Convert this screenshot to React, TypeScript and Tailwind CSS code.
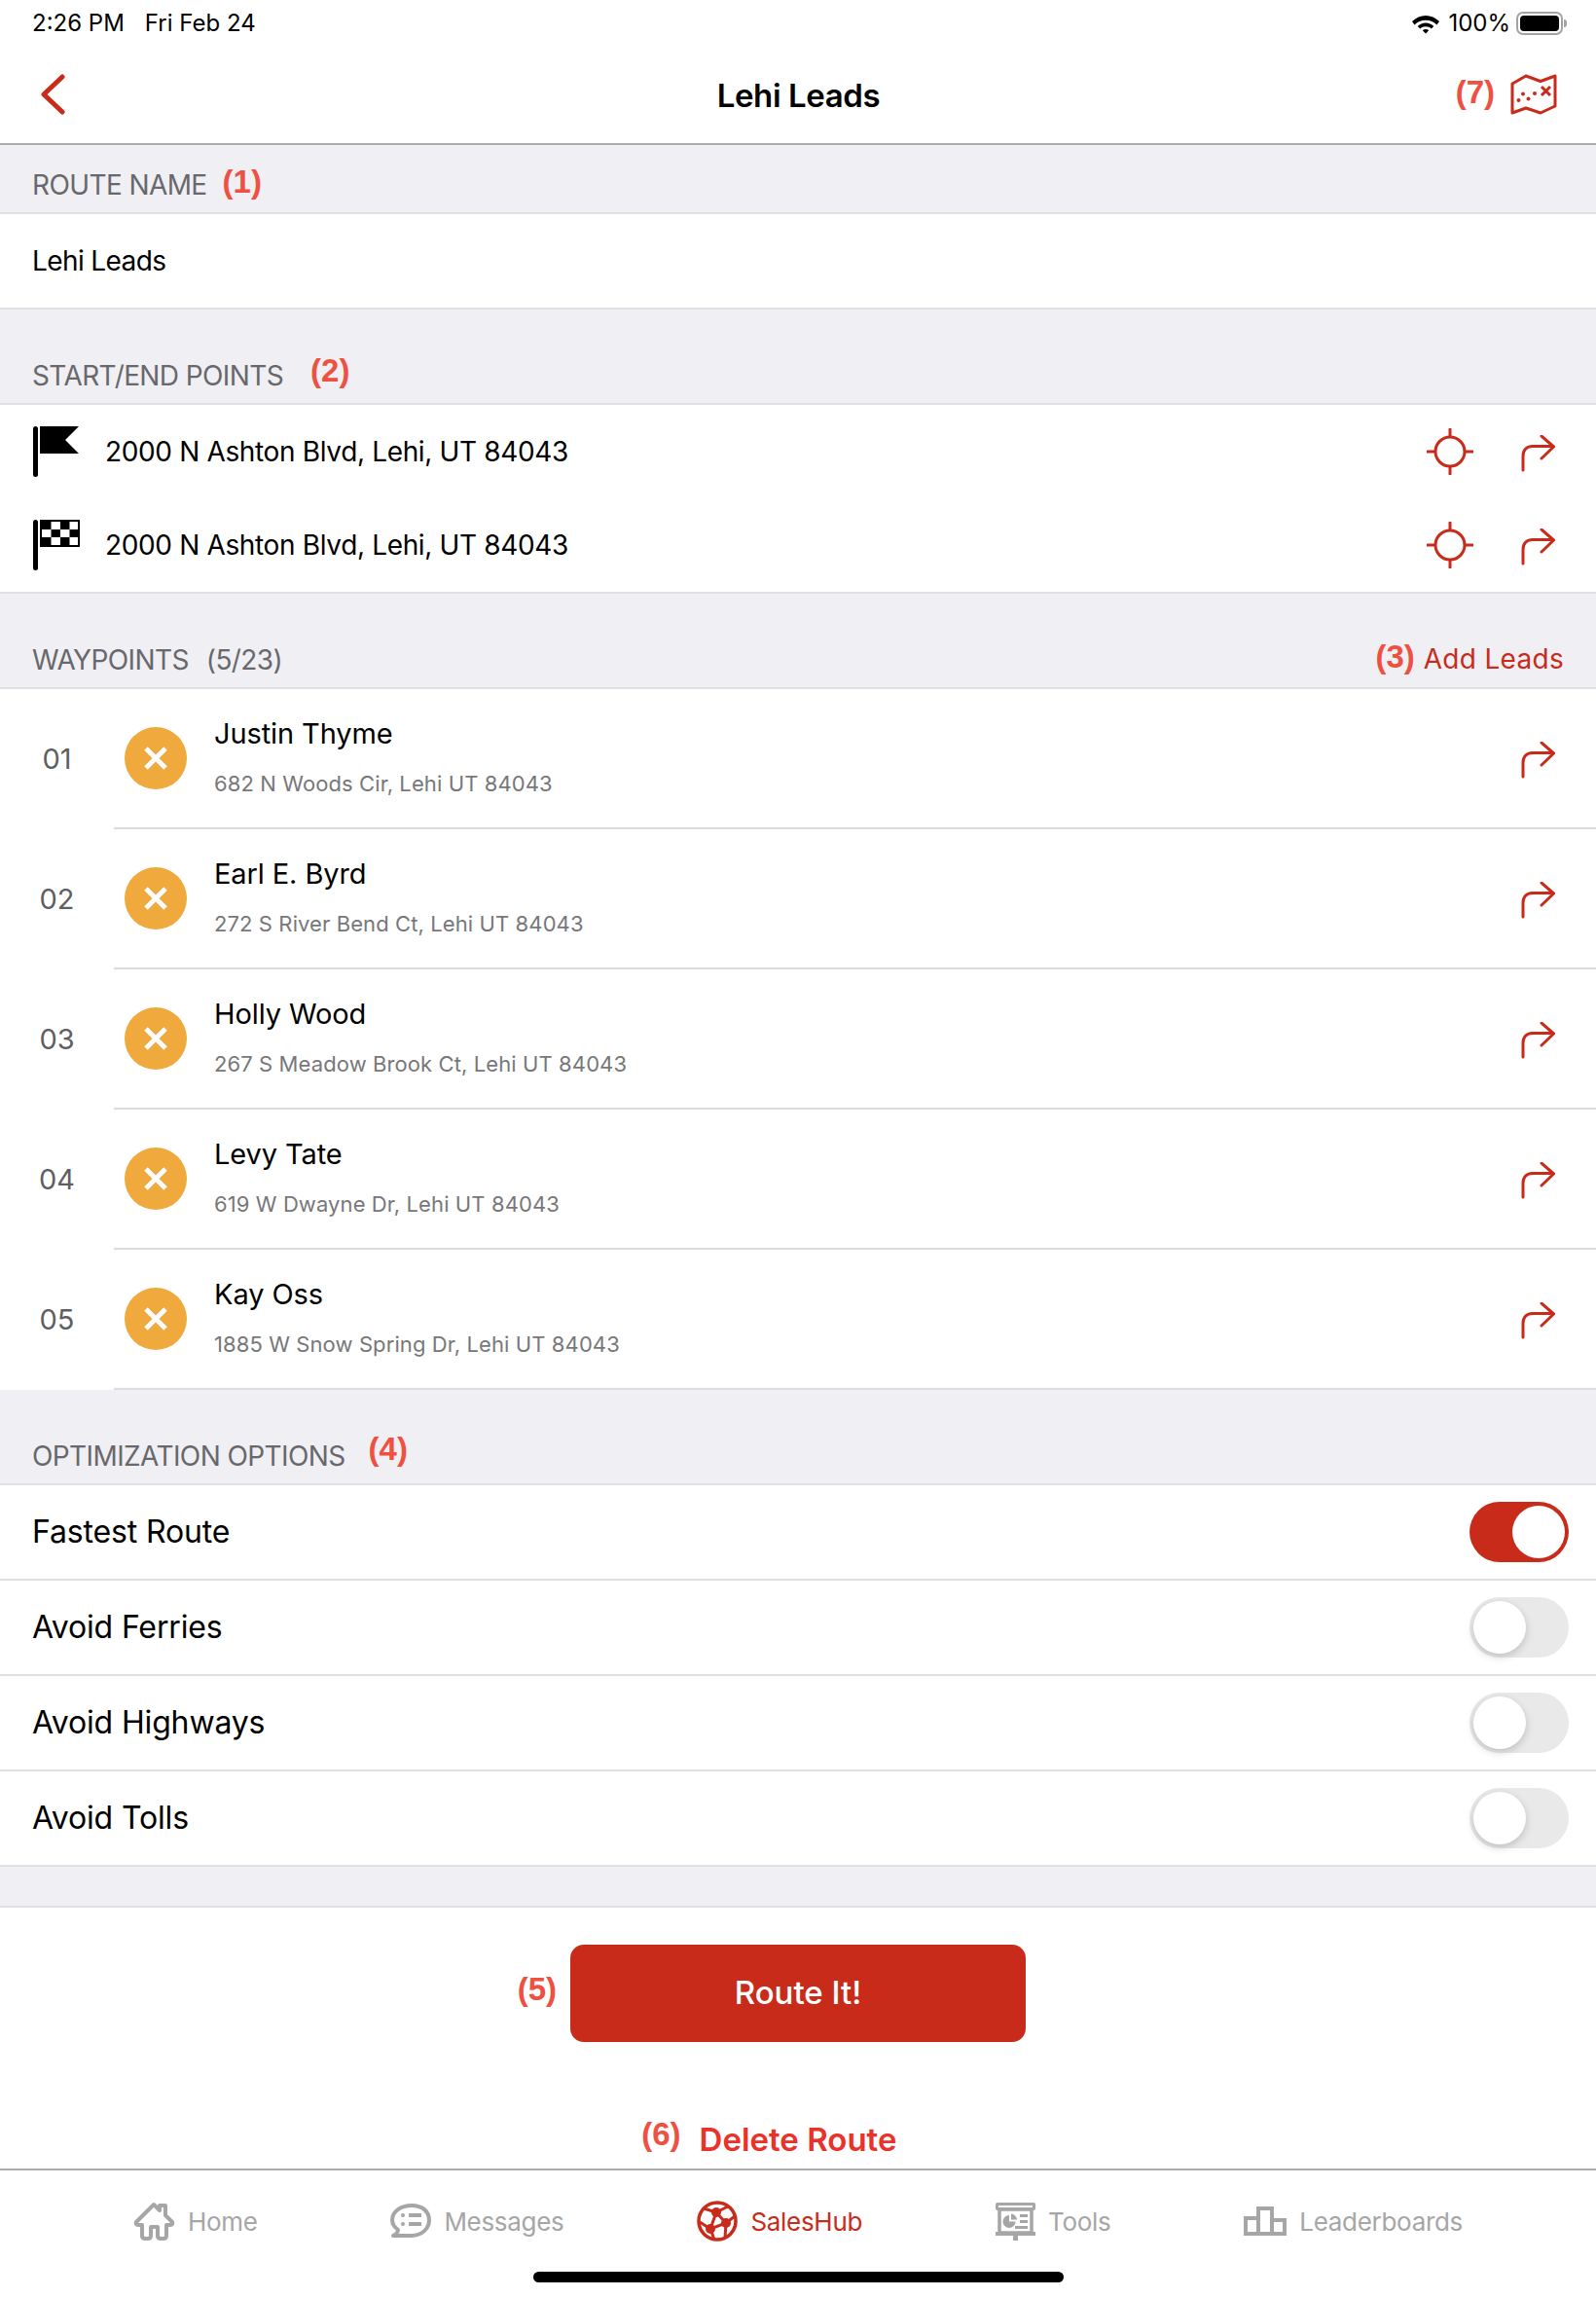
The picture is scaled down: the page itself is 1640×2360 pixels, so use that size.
import React from 'react';

const RED = '#c92b1b';
const GRAY = '#a6a6a6';

function Note({ children, className = '' }: { children: React.ReactNode; className?: string }) {
  return (
    <span className={`font-['Liberation_Sans',sans-serif] font-bold text-[33px] leading-[40px] text-[#ee5042] ${className}`}>
      {children}
    </span>
  );
}

function SectionHeader({ children, height }: { children: React.ReactNode; height: string }) {
  return (
    <div className={`${height} flex items-end justify-between pl-[33px] pr-[33px] pb-[11px] bg-[#f0f0f4] border-b-2 border-[#e0e0e3]`}>
      {children}
    </div>
  );
}

function HeaderLabel({ children }: { children: React.ReactNode }) {
  return <span className="text-[28px] leading-[34px] text-[#68686c] tracking-[-0.6px]">{children}</span>;
}

function ArrowIcon() {
  return (
    <svg width="36" height="38" viewBox="0 0 36 38" fill="none" stroke={RED} strokeWidth="3" strokeLinecap="round" strokeLinejoin="round" className="mt-[3px]">
      <path d="M2 36V22C2 15 6 11.500 12 11.500H33" />
      <path d="M21 1L33.500 12L21 24" />
    </svg>
  );
}

function TargetIcon() {
  return (
    <svg width="48" height="48" viewBox="0 0 48 48" fill="none" stroke={RED} strokeWidth="3" strokeLinecap="round">
      <circle cx="24" cy="24" r="15" />
      <path d="M24 1V8M24 40V47M1 24H8M40 24H47" />
    </svg>
  );
}

function StartFlag() {
  return (
    <svg width="48" height="52" viewBox="0 0 48 52">
      <rect x="0" y="0" width="5" height="52" rx="2.500" fill="#000" />
      <path d="M7 0H47L33 14L47 28H7Z" fill="#000" />
    </svg>
  );
}

function EndFlag() {
  const cells: React.ReactNode[] = [];
  for (let r = 0; r < 3; r++) {
    for (let c = 0; c < 4; c++) {
      if ((r + c) % 2 === 0) cells.push(<rect key={`${r}-${c}`} x={9 + c * 9.500} y={2 + r * 8} width="9.500" height="8" fill="#000" />);
    }
  }
  return (
    <svg width="48" height="52" viewBox="0 0 48 52">
      <rect x="0" y="0" width="5" height="52" rx="2.500" fill="#000" />
      <rect x="8" y="1" width="39" height="26" fill="#fff" stroke="#000" strokeWidth="2" />
      {cells}
    </svg>
  );
}

function MapIcon() {
  return (
    <svg width="48" height="42" viewBox="0 0 48 42" fill="none">
      <path d="M2 10L16 2L31 7.500L46 2V33L31 40L16 35L2 40Z" stroke={RED} strokeWidth="3" strokeLinejoin="round" />
      <circle cx="8.500" cy="27" r="2" fill={RED} />
      <circle cx="13" cy="20.500" r="2" fill={RED} />
      <circle cx="18.500" cy="25.500" r="2" fill={RED} />
      <circle cx="25" cy="20" r="2" fill={RED} />
      <path d="M32 13L41 22M41 13L32 22" stroke={RED} strokeWidth="3" />
    </svg>
  );
}

function Toggle({ on }: { on?: boolean }) {
  return (
    <div className={`w-[102px] h-[62px] rounded-full p-[4px] flex ${on ? 'bg-[#c92b1b] justify-end' : 'bg-[#e9e9ea] justify-start'}`}>
      <div className={`w-[54px] h-[54px] rounded-full bg-white ${on ? '' : 'shadow-[0_3px_8px_rgba(0,0,0,0.18)]'}`} />
    </div>
  );
}

function HomeIcon() {
  return (
    <svg width="43" height="40" viewBox="0 0 43 40" fill="none" stroke={GRAY} strokeWidth="4" strokeLinejoin="round">
      <path d="M21 3L3 21Q2 24 5 24H9V35Q9 38 12 38H15Q18 38 18 35V26H25V35Q25 38 28 38H31Q34 38 34 35V24H38Q41 24 40 21L33 14V4H27V9Z" />
    </svg>
  );
}

function MessagesIcon() {
  return (
    <svg width="42" height="36" viewBox="0 0 42 36" fill="none">
      <path d="M8 27C4 24 2 21 2 17C2 8 11 2 22 2C33 2 40 8 40 17C40 26 32 33 22 33H3C5 32 8 30 8 27Z" stroke={GRAY} strokeWidth="4" strokeLinejoin="round" />
      <circle cx="13" cy="12" r="2" fill={GRAY} />
      <circle cx="13" cy="21" r="2" fill={GRAY} />
      <rect x="19" y="10" width="13" height="4" fill={GRAY} />
      <rect x="19" y="19" width="13" height="4" fill={GRAY} />
    </svg>
  );
}

function HubIcon() {
  return (
    <svg width="42" height="42" viewBox="0 0 42 42" fill="none" stroke={RED}>
      <circle cx="21" cy="21" r="19" strokeWidth="3.500" />
      <path d="M20 12L30 23L14 29L20 12M20 12L7 8M20 12L32 6M30 23L39 16M30 23L29 38M14 29L3 22M14 29L18 40" strokeWidth="3" />
      <circle cx="20" cy="12" r="5" fill={RED} stroke="none" />
      <circle cx="30" cy="23" r="5" fill={RED} stroke="none" />
      <circle cx="14" cy="29" r="5" fill={RED} stroke="none" />
    </svg>
  );
}

function ToolsIcon() {
  return (
    <svg width="41" height="39" viewBox="0 0 41 39" fill="none">
      <rect x="0" y="0" width="41" height="8" rx="2" fill={GRAY} />
      <rect x="3" y="3" width="35" height="2" fill="#fff" />
      <rect x="4" y="7" width="33" height="24" stroke={GRAY} strokeWidth="3.500" />
      <rect x="0" y="30" width="41" height="4" fill={GRAY} />
      <rect x="18" y="33" width="5" height="6" fill={GRAY} />
      <path d="M14 13A6.500 6.500 0 1 0 20.500 19.500H14Z" fill={GRAY} />
      <path d="M16 11.500A6.500 6.500 0 0 1 22 17.500H16Z" fill={GRAY} />
      <rect x="25" y="12" width="8" height="3" fill={GRAY} />
      <rect x="25" y="18" width="8" height="3" fill={GRAY} />
      <rect x="20" y="24" width="13" height="3" fill={GRAY} />
    </svg>
  );
}

function BoardsIcon() {
  return (
    <svg width="44" height="30" viewBox="0 0 44 30" fill="none" stroke={GRAY} strokeWidth="4">
      <rect x="2" y="12" width="13" height="16" />
      <rect x="15" y="2" width="14" height="26" />
      <rect x="29" y="14" width="13" height="14" />
    </svg>
  );
}

const waypoints = [
  { num: '01', name: 'Justin Thyme', address: '682 N Woods Cir, Lehi UT 84043' },
  { num: '02', name: 'Earl E. Byrd', address: '272 S River Bend Ct, Lehi UT 84043' },
  { num: '03', name: 'Holly Wood', address: '267 S Meadow Brook Ct, Lehi UT 84043' },
  { num: '04', name: 'Levy Tate', address: '619 W Dwayne Dr, Lehi UT 84043' },
  { num: '05', name: 'Kay Oss', address: '1885 W Snow Spring Dr, Lehi UT 84043' },
];

const options = [
  { label: 'Fastest Route', on: true },
  { label: 'Avoid Ferries' },
  { label: 'Avoid Highways' },
  { label: 'Avoid Tolls' },
];

const tabs = [
  { label: 'Home', icon: <HomeIcon /> },
  { label: 'Messages', icon: <MessagesIcon /> },
  { label: 'SalesHub', icon: <HubIcon />, active: true },
  { label: 'Tools', icon: <ToolsIcon /> },
  { label: 'Leaderboards', icon: <BoardsIcon /> },
];

export default function App() {
  return (
    <div className="w-[1640px] h-[2360px] overflow-hidden bg-white font-['Inter',sans-serif] text-black">
      <div className="h-[46px] flex items-center justify-between pl-[33px] pr-[30px] text-[24px] leading-[30px] pt-[2px]">
        <div className="flex gap-[21px]">
          <span>2:26 PM</span>
          <span>Fri Feb 24</span>
        </div>
        <div className="flex items-center">
          <svg width="30" height="22" viewBox="0 0 30 22" className="mr-[8px]">
            <path d="M15 3C20 3 25 5 29 9L26.500 12.500C23.500 9.500 19.500 7.800 15 7.800C10.500 7.800 6.500 9.500 3.500 12.500L1 9C5 5 10 3 15 3Z" fill="#000" />
            <path d="M15 10.500C18 10.500 21 11.700 23.300 14L20.800 16.500C19.300 15 17.200 14.200 15 14.200C12.800 14.200 10.700 15 9.200 16.500L6.700 14C9 11.700 12 10.500 15 10.500Z" fill="#000" />
            <path d="M15 17C16.200 17 17.300 17.400 18.200 18.200L15 21.500L11.800 18.200C12.700 17.400 13.800 17 15 17Z" fill="#000" />
          </svg>
          <span>100%</span>
          <div className="ml-[6px] w-[48px] h-[24px] rounded-[7px] border-2 border-[#a3a3a3] p-[2px]">
            <div className="w-full h-full rounded-[4px] bg-black" />
          </div>
          <div className="w-[3px] h-[8px] ml-[1px] rounded-r-full bg-[#a3a3a3]" />
        </div>
      </div>

      <div className="h-[103px] grid grid-cols-[1fr_auto_1fr] items-center pl-[41px] pr-[40px] border-b-2 border-[#ababab]">
        <svg width="26" height="42" viewBox="0 0 26 42" fill="none" stroke={RED} strokeWidth="5" strokeLinecap="round" strokeLinejoin="round">
          <path d="M23 3L4 21L23 39" />
        </svg>
        <span className="text-[33px] leading-[40px] font-semibold tracking-[-0.4px] mt-[3px]">Lehi Leads</span>
        <div className="flex items-center justify-end gap-[16px]">
          <Note className="-mt-[3px]">(7)</Note>
          <MapIcon />
        </div>
      </div>

      <SectionHeader height="h-[71px]">
        <div className="flex items-end gap-[16px]">
          <HeaderLabel>ROUTE NAME</HeaderLabel>
          <Note>(1)</Note>
        </div>
      </SectionHeader>
      <div className="h-[98px] flex items-center pl-[33px] text-[28px] tracking-[-0.6px] border-b-2 border-[#e0e0e3]">Lehi Leads</div>

      <SectionHeader height="h-[98px]">
        <div className="flex items-end gap-[28px]">
          <HeaderLabel>START/END POINTS</HeaderLabel>
          <Note className="mb-[2px]">(2)</Note>
        </div>
      </SectionHeader>
      <div className="border-b-2 border-[#e0e0e3]">
        {[<StartFlag key="s" />, <EndFlag key="e" />].map((flag, i) => (
          <div key={i} className="h-[96px] flex items-center pl-[34px] pr-[41px]">
            <div className="w-[74px] -mt-[1px]">{flag}</div>
            <span className="flex-1 text-[28px] tracking-[-0.35px]">2000 N Ashton Blvd, Lehi, UT 84043</span>
            <TargetIcon />
            <div className="ml-[49px]"><ArrowIcon /></div>
          </div>
        ))}
      </div>

      <SectionHeader height="h-[98px]">
        <div className="flex gap-[18px]">
          <HeaderLabel>WAYPOINTS</HeaderLabel>
          <HeaderLabel>(5/23)</HeaderLabel>
        </div>
        <div className="flex items-end gap-[9px]">
          <Note>(3)</Note>
          <span className="text-[28px] leading-[34px] text-[#c92b1b] tracking-[0.3px] mb-[1px]">Add Leads</span>
        </div>
      </SectionHeader>
      {waypoints.map(w => (
        <div key={w.num} className="flex h-[144px]">
          <div className="w-[117px] flex items-center justify-center text-[29px] text-[#5f5f63]">{w.num}</div>
          <div className="flex-1 flex items-center border-b-2 border-[#dcdce0] pr-[41px]">
            <div className="w-[64px] h-[64px] ml-[11px] rounded-full bg-[#efa93c] flex items-center justify-center">
              <svg width="26" height="26" viewBox="0 0 26 26" stroke="#fff" strokeWidth="5">
                <path d="M3 3L23 23M23 3L3 23" />
              </svg>
            </div>
            <div className="flex-1 ml-[28px] -mt-[3px]">
              <div className="text-[29px] leading-[36px] tracking-[-0.1px]">{w.name}</div>
              <div className="mt-[19px] text-[22px] leading-[28px] text-[#77777a] tracking-[0.1px]">{w.address}</div>
            </div>
            <ArrowIcon />
          </div>
        </div>
      ))}

      <SectionHeader height="h-[98px]">
        <div className="flex items-end gap-[24px]">
          <HeaderLabel>OPTIMIZATION OPTIONS</HeaderLabel>
          <Note className="mb-[4px]">(4)</Note>
        </div>
      </SectionHeader>
      {options.map(o => (
        <div key={o.label} className="h-[98px] flex items-center justify-between pl-[33px] pr-[28px] text-[32px] tracking-[-0.15px] border-b-2 border-[#e0e0e3]">
          <span>{o.label}</span>
          <Toggle on={o.on} />
        </div>
      ))}

      <div className="h-[42px] bg-[#f0f0f4] border-b-2 border-[#e0e0e3]" />

      <div className="h-[270px] flex flex-col items-center pt-[38px] border-b-2 border-[#ababab]">
        <div className="relative w-[468px] h-[100px] rounded-[14px] bg-[#c92b1b] flex items-center justify-center text-white text-[33px] font-medium">
          Route It!
          <Note className="absolute right-full mr-[14px] top-[26px]">(5)</Note>
        </div>
        <div className="relative mt-[78px] text-[#e8322a] text-[33px] leading-[44px] font-semibold">
          Delete Route
          <Note className="absolute right-full mr-[19px] top-[-3px]">(6)</Note>
        </div>
      </div>

      <div className="h-[104px] flex items-center justify-evenly">
        {tabs.map(t => (
          <div key={t.label} className="flex items-center gap-[13px]">
            {t.icon}
            <span className={`text-[26px] tracking-[-0.3px] ${t.active ? 'text-[#c92b1b]' : 'text-[#a6a6a6]'}`}>{t.label}</span>
          </div>
        ))}
      </div>
      <div className="w-[545px] h-[11px] mx-auto rounded-full bg-black" />
    </div>
  );
}
